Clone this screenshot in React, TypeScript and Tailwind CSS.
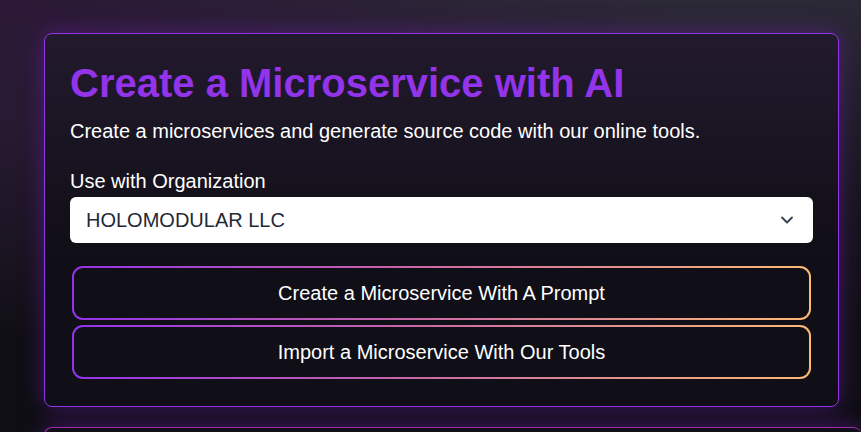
import { ChevronDown } from "lucide-react";

const orgs = ["HOLOMODULAR LLC"];

function GradientButton({ label }: { label: string }) {
  return (
    <div className="mx-[2px] rounded-[11px] bg-[linear-gradient(to_right,#9333ea,#c965a8_45%,#fdba74)] p-[2px]">
      <button className="flex h-[50px] w-full items-center justify-center rounded-[9px] bg-[#100e16] text-[20px] text-white">
        {label}
      </button>
    </div>
  );
}

export default function App() {
  return (
    <div className="h-[432px] w-full overflow-hidden bg-[radial-gradient(ellipse_at_top_left,#2b1836_0%,transparent_55%),linear-gradient(to_bottom,#2c2937_0%,#18151f_45%,#0f0e14_80%)] pl-[44px] pt-[33px] font-['Liberation_Sans',Arial,sans-serif]">
      {/* Main card */}
      <div className="w-[795px] rounded-[8px] border border-[#9333ea] bg-[linear-gradient(to_bottom,#221a2d_0%,#100e16_60%)] px-[25px] pb-[27px] pt-[25px] shadow-[0_0_22px_rgba(107,33,168,0.55)]">
        <h1 className="text-[40px] font-bold leading-[48px] text-[#9333ea]">
          Create a Microservice with AI
        </h1>
        <p className="mt-[10px] text-[20px] leading-[28px] text-white">
          Create a microservices and generate source code with our online tools.
        </p>

        <label className="mt-[22px] block text-[20px] leading-[28px] text-white">
          Use with Organization
        </label>
        <div className="mt-[2px] flex h-[46px] items-center justify-between rounded-[6px] bg-white pl-4 pr-4">
          <span className="text-[20px] text-[#1f2937]">{orgs[0]}</span>
          <ChevronDown size={20} strokeWidth={2.25} className="text-[#374151]" />
        </div>

        <div className="mt-[23px] flex flex-col gap-[5px]">
          <GradientButton label="Create a Microservice With A Prompt" />
          <GradientButton label="Import a Microservice With Our Tools" />
        </div>
      </div>

      {/* Next card, cut off by the window */}
      <div className="mt-[20px] h-[40px] rounded-t-[8px] border-l border-t border-[#a02aae] bg-[#100e16] shadow-[0_0_22px_rgba(107,33,168,0.55)]" />
    </div>
  );
}
